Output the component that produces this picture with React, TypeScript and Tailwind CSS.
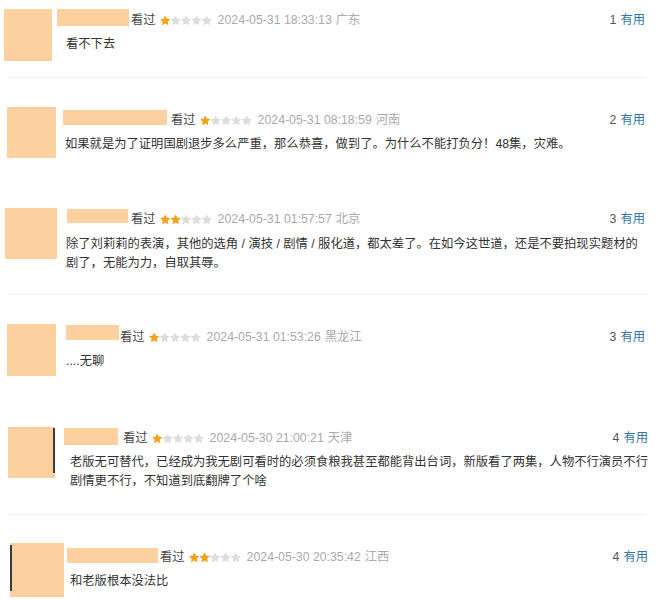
import React from 'react'

type Review = {
  box: string
  avatar: string
  mark?: 'left' | 'right'
  body: string
  name: string
  seen: string
  text: string
  rating: number
  date: string
  loc: string
  useful: number
  lines: string[]
  divider?: boolean
}

const reviews: Review[] = [
  {
    box: 'h-[77px]',
    avatar: 'ml-[4px] mt-[9px] w-[48px] h-[52px]',
    body: 'ml-[5px] mt-[11px] mr-[15px]',
    name: 'w-[72px] h-[17px] mb-[5px]',
    seen: 'ml-[2px]',
    text: 'ml-[9px] mt-[6px]',
    rating: 1,
    date: '2024-05-31 18:33:13',
    loc: '广东',
    useful: 1,
    lines: ['看不下去'],
    divider: true,
  },
  {
    box: 'h-[117px]',
    avatar: 'ml-[7px] mt-[29px] w-[49px] h-[51px]',
    body: 'ml-[7px] mt-[33px] mr-[15px]',
    name: 'w-[104px] h-[15px] mb-[5px]',
    seen: 'ml-[4px]',
    text: 'ml-[2px] mt-[6px]',
    rating: 1,
    date: '2024-05-31 08:18:59',
    loc: '河南',
    useful: 2,
    lines: ['如果就是为了证明国剧退步多么严重，那么恭喜，做到了。为什么不能打负分！48集，灾难。'],
  },
  {
    box: 'h-[99px]',
    avatar: 'ml-[5px] mt-[13px] w-[52px] h-[51px]',
    body: 'ml-[10px] mt-[15px] mr-[15px]',
    name: 'w-[61px] h-[14px] mb-[6px]',
    seen: 'ml-[3px]',
    text: '-ml-px mt-[7px]',
    rating: 2,
    date: '2024-05-31 01:57:57',
    loc: '北京',
    useful: 3,
    lines: [
      '除了刘莉莉的表演，其他的选角 / 演技 / 剧情 / 服化道，都太差了。在如今这世道，还是不要拍现实题材的',
      '剧了，无能为力，自取其辱。',
    ],
    divider: true,
  },
  {
    box: 'h-[115px]',
    avatar: 'ml-[7px] mt-[29px] w-[49px] h-[52px]',
    body: 'ml-[10px] mt-[33px] mr-[15px]',
    name: 'w-[53px] h-[15px] mb-[9px]',
    seen: 'ml-[1px]',
    text: 'ml-0 mt-[6px]',
    rating: 1,
    date: '2024-05-31 01:53:26',
    loc: '黑龙江',
    useful: 3,
    lines: ['....无聊'],
  },
  {
    box: 'h-[104px]',
    avatar: 'ml-[8px] mt-[17px] w-[47px] h-[51px]',
    mark: 'right',
    body: 'ml-[9px] mt-[19px] mr-[12px]',
    name: 'w-[54px] h-[17px] mb-[3px]',
    seen: 'ml-[5px]',
    text: 'ml-[6px] mt-[6px]',
    rating: 1,
    date: '2024-05-30 21:00:21',
    loc: '天津',
    useful: 4,
    lines: [
      '老版无可替代，已经成为我无剧可看时的必须食粮我甚至都能背出台词，新版看了两集，人物不行演员不行',
      '剧情更不行，不知道到底翻牌了个啥',
    ],
    divider: true,
  },
  {
    box: 'h-[86px]',
    avatar: 'ml-[10px] mt-[28px] w-[54px] h-[54px]',
    mark: 'left',
    body: 'ml-[3px] mt-[33px] mr-[12px]',
    name: 'w-[91px] h-[15px] mb-[3px]',
    seen: 'ml-[2px]',
    text: 'ml-[3px] mt-[6px]',
    rating: 2,
    date: '2024-05-30 20:35:42',
    loc: '江西',
    useful: 4,
    lines: ['和老版根本没法比'],
  },
]

// five-point star, outer radius 5.4, inner 2.7, centred at (5.2, 5.6)
const STAR = (() => {
  const p: string[] = []
  for (let k = 0; k < 10; k++) {
    const r = k % 2 === 0 ? 5.4 : 2.7
    const a = (Math.PI / 5) * k - Math.PI / 2
    p.push(`${(5.2 + r * Math.cos(a)).toFixed(2)},${(5.8 + r * Math.sin(a)).toFixed(2)}`)
  }
  return p.join(' ')
})()

function Stars({ n }: { n: number }) {
  return (
    <svg width="52" height="11" viewBox="0 0 52 11" className="ml-[4px] shrink-0">
      {[0, 1, 2, 3, 4].map(i => (
        <polygon
          key={i}
          points={STAR}
          transform={`translate(${i * 10.4} 0)`}
          fill={i < n ? '#f4a21c' : '#dddddd'}
        />
      ))}
    </svg>
  )
}

export default function App() {
  return (
    <main
      className="w-[660px] h-[601px] overflow-hidden bg-white text-[12.3px]"
      style={{ fontFamily: '"Liberation Sans", "Noto Sans CJK SC", sans-serif' }}
    >
      {reviews.map((r, idx) => (
        <div key={idx}>
          <div className={`flex ${r.box}`}>
            <div className={`relative shrink-0 bg-[#fdd19f] ${r.avatar}`}>
              {r.mark === 'right' && (
                <div className="absolute right-0 top-[1px] w-[2px] h-[45px] bg-[#3b3b3b]" />
              )}
              {r.mark === 'left' && (
                <div className="absolute left-0 top-[2px] w-[2px] h-[46px] bg-[#3b3b3b]" />
              )}
            </div>
            <div className={`flex-1 flex flex-col ${r.body}`}>
              <div className="flex items-center h-[18px] whitespace-nowrap">
                <div className={`shrink-0 bg-[#fdd19f] ${r.name}`} />
                <span className={`text-[#494949] ${r.seen}`}>看过</span>
                <Stars n={r.rating} />
                <span className="ml-[6px] text-[#aaaaaa]">{r.date}</span>
                <span className="ml-[4px] text-[#aaaaaa]">{r.loc}</span>
                <span className="ml-auto text-[#555555]">{r.useful}</span>
                <span className="ml-[4px] text-[#3377aa]">有用</span>
              </div>
              <div className={`text-[#333333] leading-[19px] whitespace-nowrap ${r.text}`}>
                {r.lines.map((l, i) => (
                  <div key={i}>{l}</div>
                ))}
              </div>
            </div>
          </div>
          {r.divider && <div className="h-px bg-[#f0f0f0] ml-[7px] mr-[13px]" />}
        </div>
      ))}
    </main>
  )
}
